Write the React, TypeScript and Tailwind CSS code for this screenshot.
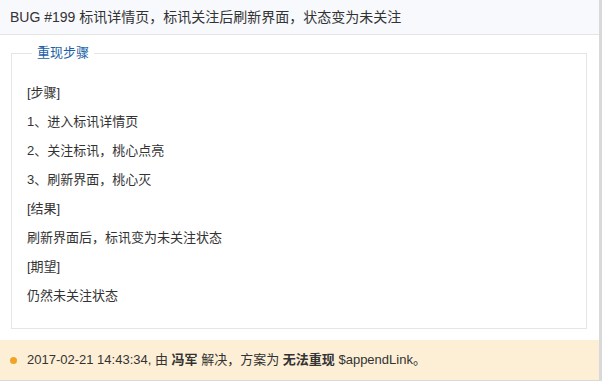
const font = "font-['Liberation_Sans','Noto_Sans_CJK_SC',sans-serif]";

const lines = [
    "[步骤]",
    "1、进入标讯详情页",
    "2、关注标讯，桃心点亮",
    "3、刷新界面，桃心灭",
    "[结果]",
    "刷新界面后，标讯变为未关注状态",
    "[期望]",
    "仍然未关注状态",
];

const App = () => {
    return (
        <div className={`w-[602px] h-[381px] bg-[#d9d9d9] ${font}`}>
            <div className="w-[599px] h-[380px] bg-white flex flex-col">
                {/* title bar */}
                <div className="h-[35px] shrink-0 flex items-center px-[10px] bg-[#f8f9fc] border-b border-[#e5e5e5] text-[14px] text-[#333]">
                    BUG #199 标讯详情页，标讯关注后刷新界面，状态变为未关注
                </div>

                {/* steps */}
                <div className="pt-[8px] px-[11px] flex-1">
                    <fieldset className="w-[576px] border border-[#e5e5e5] px-[15px] pt-[15px] pb-[18px]">
                        <legend className="px-[5px] ml-[5px] text-[13px] leading-[20px] text-[#1d5fa6]">重现步骤</legend>
                        {lines.map((l, i) => (
                            <div key={i} className="h-[29px] leading-[29px] text-[13px] text-[#333]">{l}</div>
                        ))}
                    </fieldset>
                </div>

                {/* history */}
                <div className="h-[40px] shrink-0 bg-[#fdefd6] flex items-center pl-[10px] text-[13px] text-[#333]">
                    <span className="w-[7px] h-[7px] rounded-full bg-[#f1a325] mr-[10px]" />
                    <span>
                        2017-02-21 14:43:34, 由 <b className="font-bold">冯军</b> 解决，方案为 <b className="font-bold">无法重现</b> $appendLink。
                    </span>
                </div>
            </div>
        </div>
    );
};

export default App;
